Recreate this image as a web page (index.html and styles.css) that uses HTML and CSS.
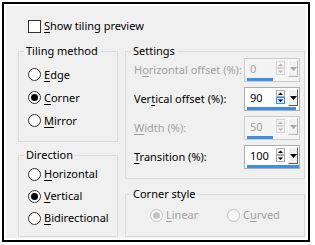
FILE: index.html
```html
<!DOCTYPE html>
<html>
<head>
<meta charset="utf-8">
<link rel="stylesheet" href="styles.css">
</head>
<body>
<div class="frame">
  <div class="dialog">
    <div class="check-row"><span class="checkbox"></span><span><u>S</u>how tiling preview</span></div>
    <div class="columns">
      <div class="col col-left">
        <fieldset class="group group-tiling">
          <legend>Tiling method</legend>
          <div class="radio-list">
            <div class="radio-row"><span class="radio"></span><span><u>E</u>dge</span></div>
            <div class="radio-row"><span class="radio on"></span><span><u>C</u>orner</span></div>
            <div class="radio-row"><span class="radio"></span><span><u>M</u>irror</span></div>
          </div>
        </fieldset>
        <fieldset class="group group-direction">
          <legend>Direction</legend>
          <div class="radio-list">
            <div class="radio-row"><span class="radio"></span><span><u>H</u>orizontal</span></div>
            <div class="radio-row"><span class="radio on"></span><span><u>V</u>ertical</span></div>
            <div class="radio-row"><span class="radio"></span><span><u>B</u>idirectional</span></div>
          </div>
        </fieldset>
      </div>
      <div class="col col-right">
        <fieldset class="group group-settings">
          <legend>Settings</legend>
          <div class="field-list">
            <div class="field-row disabled">
              <span class="field-label">H<u>o</u>rizontal offset (%):</span>
              <div class="spin">
                <div class="spin-main">
                  <span class="spin-value">0</span>
                  <svg class="spin-arrows" width="9" height="15" viewBox="0 0 9 15"><rect x="0.5" y="0.5" width="8" height="6" fill="#f4f4f4" stroke="#d4d4d4"/><rect x="0.5" y="7.5" width="8" height="6" fill="#f4f4f4" stroke="#d4d4d4"/><path d="M2 5 L4.5 2.5 L7 5 Z" fill="#b0b0b0"/><path d="M2 9.5 L7 9.5 L4.5 12 Z" fill="#b0b0b0"/></svg>
                  <span class="spin-drop"><svg width="7" height="4" viewBox="0 0 7 4"><path d="M0 0 L7 0 L3.5 4 Z" fill="#a8a8a8"/></svg></span>
                </div>
                <div class="spin-track"><span class="spin-bar" style="width:50%"></span></div>
              </div>
            </div>
            <div class="field-row">
              <span class="field-label">Ver<u>t</u>ical offset (%):</span>
              <div class="spin">
                <div class="spin-main">
                  <span class="spin-value">90</span>
                  <svg class="spin-arrows" width="9" height="15" viewBox="0 0 9 15"><rect x="0.5" y="0.5" width="8" height="6" fill="#f4f4f4" stroke="#adadad"/><rect x="0.5" y="7.5" width="8" height="6" fill="#cce4f7" stroke="#3c8fe3"/><path d="M2 5 L4.5 2.5 L7 5 Z" fill="#000"/><path d="M2 9.5 L7 9.5 L4.5 12 Z" fill="#000"/></svg>
                  <span class="spin-drop"><svg width="7" height="4" viewBox="0 0 7 4"><path d="M0 0 L7 0 L3.5 4 Z" fill="#000"/></svg></span>
                </div>
                <div class="spin-track"><span class="spin-bar" style="width:95%"></span></div>
              </div>
            </div>
            <div class="field-row disabled">
              <span class="field-label"><u>W</u>idth (%):</span>
              <div class="spin">
                <div class="spin-main">
                  <span class="spin-value">50</span>
                  <svg class="spin-arrows" width="9" height="15" viewBox="0 0 9 15"><rect x="0.5" y="0.5" width="8" height="6" fill="#f4f4f4" stroke="#d4d4d4"/><rect x="0.5" y="7.5" width="8" height="6" fill="#f4f4f4" stroke="#d4d4d4"/><path d="M2 5 L4.5 2.5 L7 5 Z" fill="#b0b0b0"/><path d="M2 9.5 L7 9.5 L4.5 12 Z" fill="#b0b0b0"/></svg>
                  <span class="spin-drop"><svg width="7" height="4" viewBox="0 0 7 4"><path d="M0 0 L7 0 L3.5 4 Z" fill="#a8a8a8"/></svg></span>
                </div>
                <div class="spin-track"><span class="spin-bar" style="width:50%"></span></div>
              </div>
            </div>
            <div class="field-row">
              <span class="field-label"><u>T</u>ransition (%):</span>
              <div class="spin">
                <div class="spin-main">
                  <span class="spin-value">100</span>
                  <svg class="spin-arrows" width="9" height="15" viewBox="0 0 9 15"><rect x="0.5" y="0.5" width="8" height="6" fill="#f4f4f4" stroke="#adadad"/><rect x="0.5" y="7.5" width="8" height="6" fill="#f4f4f4" stroke="#adadad"/><path d="M2 5 L4.5 2.5 L7 5 Z" fill="#000"/><path d="M2 9.5 L7 9.5 L4.5 12 Z" fill="#000"/></svg>
                  <span class="spin-drop"><svg width="7" height="4" viewBox="0 0 7 4"><path d="M0 0 L7 0 L3.5 4 Z" fill="#000"/></svg></span>
                </div>
                <div class="spin-track"><span class="spin-bar" style="width:100%"></span></div>
              </div>
            </div>
          </div>
        </fieldset>
        <fieldset class="group group-corner">
          <legend>Corner style</legend>
          <div class="corner-options">
            <div class="radio-row corner-option disabled"><span class="radio on"></span><span><u>L</u>inear</span></div>
            <div class="radio-row corner-option disabled"><span class="radio"></span><span>C<u>u</u>rved</span></div>
          </div>
        </fieldset>
      </div>
    </div>
  </div>
</div>
</body>
</html>
```

FILE: styles.css
```css
* { box-sizing: border-box; }
html, body { margin: 0; padding: 0; background: #fff; }
body {
  font-family: "Noto Sans", "Open Sans", sans-serif;
  font-size: 11px;
  line-height: 16px;
  color: #000;
}
u { text-decoration: underline; text-underline-offset: 2px; }

.frame {
  margin: 2px;
  width: 308px;
  height: 240px;
  border: 2px solid #000;
}
.dialog {
  height: 100%;
  border: 2px solid #fff;
  background: #f0f0f0;
  padding-top: 12px;
}
.check-row {
  display: flex;
  align-items: center;
  gap: 3px;
  margin-left: 22px;
  height: 16px;
}
.checkbox {
  width: 13px;
  height: 13px;
  border: 1px solid #333;
  background: #fff;
}
.columns {
  display: flex;
  gap: 7px;
  margin-top: 9px;
  padding-left: 12px;
}
.col { display: flex; flex-direction: column; }
.col-left { width: 100px; gap: 5px; }
.col-right { width: 180px; gap: 7px; }

.group {
  margin: 0;
  border: 1px solid #dcdcdc;
  padding: 0 0 0 8px;
  min-width: 0;
}
.group legend {
  padding: 0 2px;
  margin-left: -3px;
  line-height: 16px;
}
.group-tiling { height: 99px; }
.group-direction { height: 90px; }
.group-settings { height: 136px; }
.group-corner { height: 51px; }

.radio-list { display: flex; flex-direction: column; padding-left: 1px; }
.group-tiling .radio-list { padding-top: 4px; }
.group-tiling .radio-row { height: 23px; }
.group-direction .radio-row { height: 22px; }

.radio-row { display: flex; align-items: center; gap: 3px; }
.radio {
  width: 13px;
  height: 13px;
  border: 1px solid #333;
  border-radius: 50%;
  background: #fff;
  display: flex;
  align-items: center;
  justify-content: center;
  flex: none;
}
.radio.on::after {
  content: "";
  width: 7px;
  height: 7px;
  border-radius: 50%;
  background: #000;
}
.disabled { color: #a0a0a0; }
.disabled .radio { border-color: #c2c2c2; background: #f7f7f7; }
.disabled .radio.on::after { background: #c2c2c2; }

.field-list { display: flex; flex-direction: column; gap: 5px; margin-top: -1px; }
.field-row {
  display: flex;
  align-items: center;
  justify-content: space-between;
  height: 24px;
  padding-right: 4px;
}
.spin {
  width: 56px;
  height: 24px;
  border: 1px solid #adadad;
  background: #fff;
  display: flex;
  flex-direction: column;
}
.disabled .spin { border-color: #cccccc; background: #f4f4f4; }
.spin-main {
  height: 19px;
  display: flex;
  align-items: center;
}
.spin-value { flex: 1; padding-left: 5px; }
.spin-arrows { margin-right: 3px; flex: none; }
.spin-drop {
  width: 10px;
  align-self: stretch;
  margin: 1px 1px 1px 0;
  display: flex;
  align-items: center;
  justify-content: center;
  background: #f0f0f0;
  border-left: 1px solid #fff;
  border-top: 1px solid #fff;
  border-right: 1px solid #5a5a5a;
  border-bottom: 1px solid #5a5a5a;
}
.disabled .spin-drop { border-right-color: #b4b4b4; border-bottom-color: #b4b4b4; }
.spin-track { height: 3px; padding-left: 2px; display: flex; }
.spin-bar { display: block; height: 3px; background: #3c8fe3; }

.corner-options { display: flex; padding: 2px 0 0 16px; }
.corner-option { width: 81px; height: 22px; }
```
